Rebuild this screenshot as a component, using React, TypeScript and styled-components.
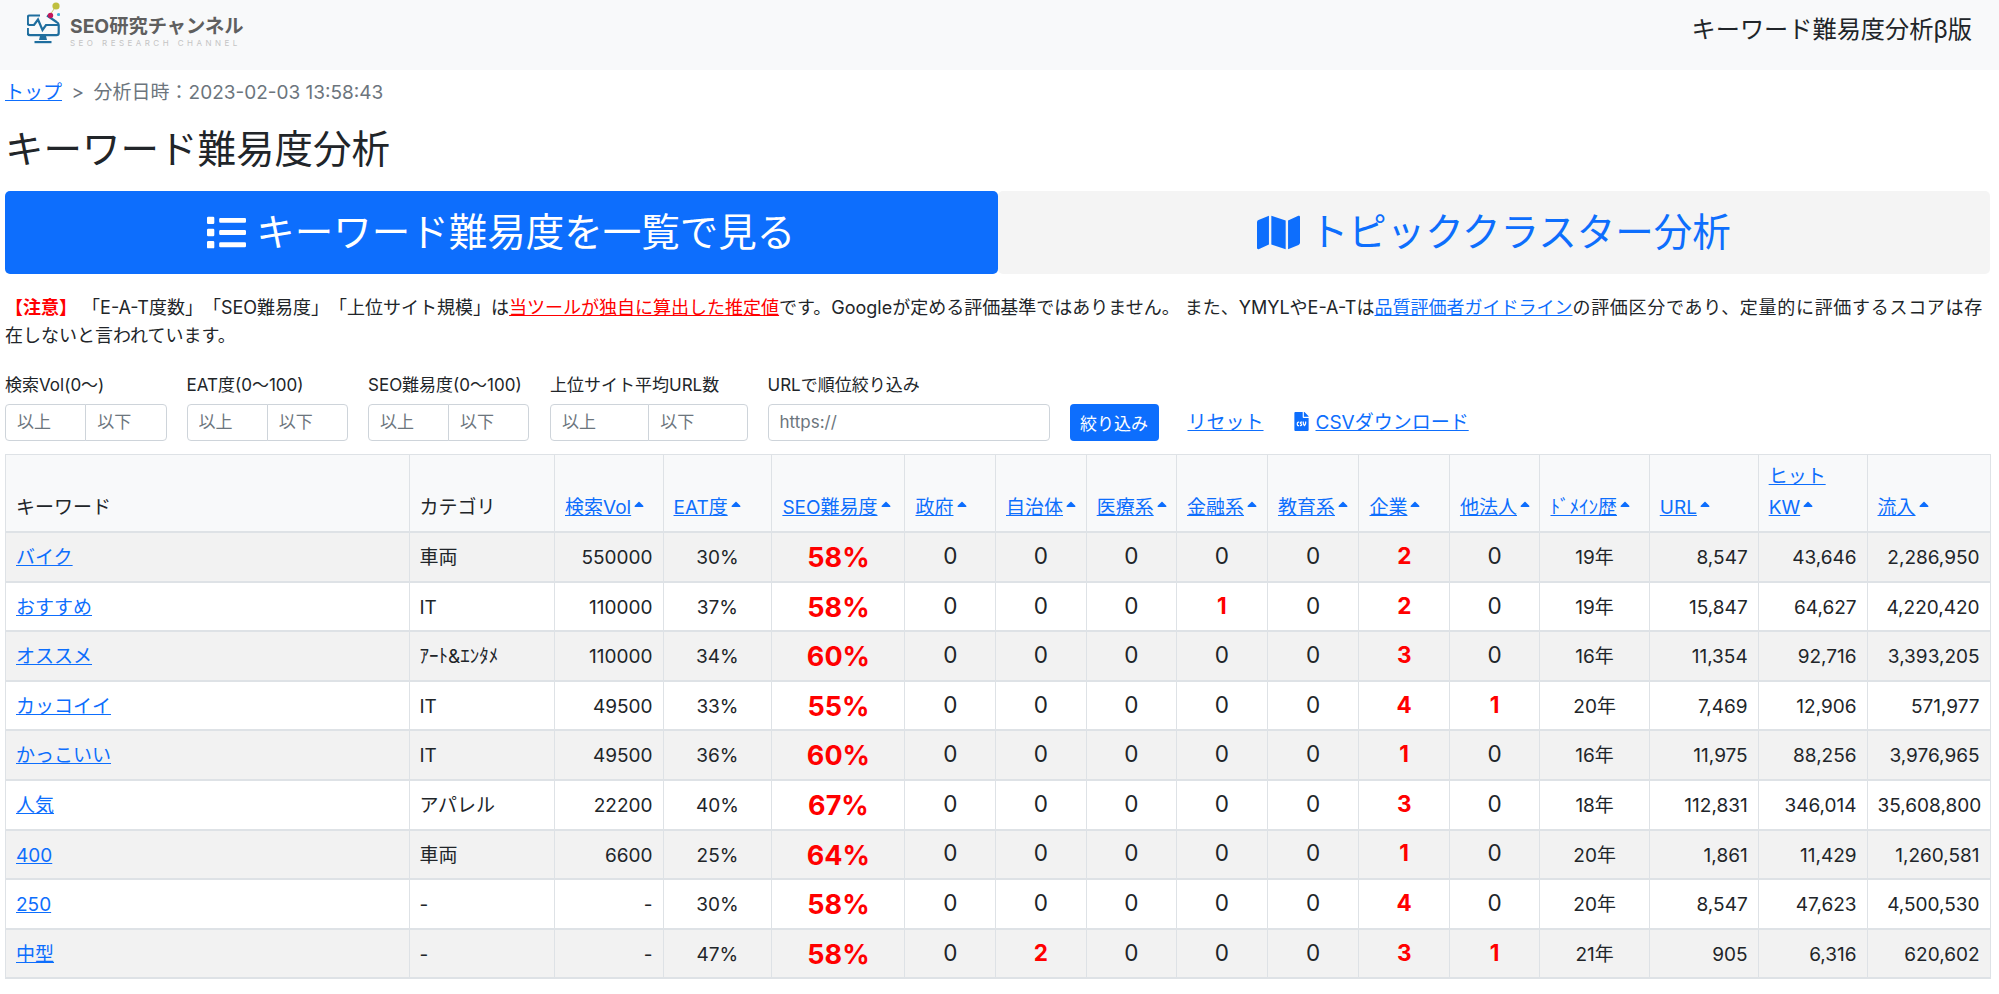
import React from 'react';
import styled, {createGlobalStyle} from 'styled-components';
import {FaFileCsv, FaList, FaMap, FaSortUp} from 'react-icons/fa';

const BLUE = '#0d6efd';
const RED = '#ff0000';

const GlobalStyle = createGlobalStyle`
  html, body {
    margin: 0;
    padding: 0;
    background: #FFFFFF;
    color: #212529;
    font-family: Inter, "Noto Sans CJK JP", sans-serif;
    font-size: 19px;
    line-height: 1.5;
    text-spacing-trim: space-all;
  }
  a {
    color: ${BLUE};
    text-decoration: underline;
  }
`;

const Navbar = styled.nav`
  height: 70px;
  background: #F8F9FA;
  display: flex;
  align-items: flex-start;
  justify-content: space-between;
  padding: 0 27px 0 27px;
`;

const Brand = styled.div`
  display: flex;
  align-items: flex-start;
  gap: 10px;
`;

const BrandIcon = styled.svg`
  width: 33px;
  height: 46px;
  flex: none;
`;

const BrandText = styled.div`
  margin-top: 13px;
  display: flex;
  flex-direction: column;
`;

const BrandName = styled.div`
  font-size: 19.3px;
  line-height: 26px;
  font-weight: 700;
  color: #5F5F5F;
  white-space: nowrap;
`;

const BrandSub = styled.div`
  font-size: 8px;
  line-height: 9px;
  color: #C4C4C4;
  letter-spacing: 3.45px;
  white-space: nowrap;
`;

const NavTitle = styled.div`
  margin-top: 12px;
  font-size: 24.2px;
  line-height: 36px;
  color: #212529;
`;

const Main = styled.main`
  padding: 0 9px 0 5px;
`;

const Breadcrumb = styled.div`
  margin-top: 8px;
  font-size: 19px;
  line-height: 30px;
  color: #6C757D;
  display: flex;
  gap: 9.5px;
`;

const PageTitle = styled.h2`
  margin: 18px 0 0 0;
  font-size: 38.5px;
  line-height: 46px;
  font-weight: 400;
`;

const Tabs = styled.div`
  margin-top: 19px;
  display: flex;
  height: 83px;
`;

const Tab = styled.a<{$active?: boolean}>`
  flex: 1;
  display: flex;
  align-items: center;
  justify-content: center;
  gap: 10px;
  font-size: 38.5px;
  text-decoration: none;
  border-radius: 5px;
  color: ${p => (p.$active ? '#FFFFFF' : BLUE)};
  background: ${p => (p.$active ? BLUE : '#F4F4F4')};
`;

const Notice = styled.p`
  margin: 20px 0 0 0;
  font-size: 18px;
  line-height: 28px;
`;

const NoticeTag = styled.b`
  color: ${RED};
`;

const NoticeRed = styled.a`
  color: ${RED};
`;

const NoticeTail = styled.span`
  letter-spacing: 0.7px;
`;

const Filters = styled.form`
  margin-top: 23.5px;
  display: flex;
  align-items: flex-end;
`;

const Field = styled.div<{$width: number; $gap: number}>`
  width: ${p => p.$width}px;
  margin-right: ${p => p.$gap}px;
  flex: none;
`;

const FieldLabel = styled.div`
  font-size: 17px;
  line-height: 22px;
  margin-bottom: 8px;
  white-space: nowrap;
`;

const InputGroup = styled.div`
  display: flex;
`;

const Input = styled.input`
  flex: 1;
  min-width: 0;
  width: 100%;
  height: 37px;
  box-sizing: border-box;
  padding: 0 11px;
  font-family: inherit;
  font-size: 17px;
  background: #FFFFFF;
  border: 1px solid #CED4DA;
  border-radius: 4px;
  &::placeholder {
    color: #6C757D;
    opacity: 1;
  }
  & + & {
    margin-left: -1px;
    border-top-left-radius: 0;
    border-bottom-left-radius: 0;
  }
  &:has(+ input) {
    border-top-right-radius: 0;
    border-bottom-right-radius: 0;
  }
`;

const SubmitButton = styled.button`
  width: 89px;
  height: 37px;
  flex: none;
  margin-right: 29px;
  padding: 0;
  border: none;
  border-radius: 4px;
  background: ${BLUE};
  color: #FFFFFF;
  font-family: inherit;
  font-size: 17px;
`;

const FilterLink = styled.a`
  font-size: 19px;
  line-height: 37px;
  margin-right: 28px;
  white-space: nowrap;
  svg {
    vertical-align: -2px;
    margin-right: 5px;
  }
`;

const Table = styled.table`
  margin-top: 13px;
  width: 100%;
  table-layout: fixed;
  border-collapse: collapse;
  font-size: 19px;
`;

const Col = styled.col<{$width: number}>`
  width: ${p => p.$width}px;
`;

const Th = styled.th`
  height: 78px;
  box-sizing: border-box;
  padding: 0 10px 8px;
  background: #F8F9FA;
  border: 1px solid #DEE2E6;
  border-bottom-width: 2px;
  vertical-align: bottom;
  text-align: left;
  font-weight: 400;
  line-height: 31px;
  white-space: pre;
  svg {
    vertical-align: -2px;
  }
`;

const Tr = styled.tr`
  &:nth-child(odd) td {
    background: #F2F2F2;
  }
`;

const Td = styled.td<{$align?: string}>`
  height: 49.6px;
  box-sizing: border-box;
  padding: 3px 10px 0;
  border: 1px solid #DEE2E6;
  border-bottom-width: 2px;
  text-align: ${p => p.$align || 'left'};
  vertical-align: middle;
  white-space: nowrap;
`;

const Level = styled.span`
  font-size: 27px;
  font-weight: 700;
  color: ${RED};
`;

const Count = styled.span<{$hit: boolean}>`
  position: relative;
  top: -2.5px;
  font-size: 22.5px;
  font-weight: ${p => (p.$hit ? 700 : 400)};
  color: ${p => (p.$hit ? RED : '#212529')};
`;

const COL_WIDTHS = [403.5, 145.5, 108.5, 108.9, 133.1, 90.5, 90.7, 90.3, 91, 91.5, 90.5, 90.5, 109.3, 108.9, 108.9, 123];

const SORT_HEADERS = ['検索Vol', 'EAT度', 'SEO難易度', '政府', '自治体', '医療系', '金融系', '教育系', '企業', '他法人', 'ﾄﾞﾒｲﾝ歴', 'URL', 'ヒット\nKW', '流入'];

const FILTERS = [
  {label: '検索Vol(0〜)', width: 161.5, gap: 20},
  {label: 'EAT度(0〜100)', width: 161.5, gap: 20},
  {label: 'SEO難易度(0〜100)', width: 161, gap: 21},
  {label: '上位サイト平均URL数', width: 197.5, gap: 20}
];

interface RowData {
  keyword: string;
  category: string;
  volume: string;
  eat: string;
  level: string;
  counts: number[];
  years: string;
  urls: string;
  hits: string;
  traffic: string;
}

const ROWS: RowData[] = [
  {keyword: 'バイク', category: '車両', volume: '550000', eat: '30%', level: '58%', counts: [0, 0, 0, 0, 0, 2, 0], years: '19年', urls: '8,547', hits: '43,646', traffic: '2,286,950'},
  {keyword: 'おすすめ', category: 'IT', volume: '110000', eat: '37%', level: '58%', counts: [0, 0, 0, 1, 0, 2, 0], years: '19年', urls: '15,847', hits: '64,627', traffic: '4,220,420'},
  {keyword: 'オススメ', category: 'ｱｰﾄ&ｴﾝﾀﾒ', volume: '110000', eat: '34%', level: '60%', counts: [0, 0, 0, 0, 0, 3, 0], years: '16年', urls: '11,354', hits: '92,716', traffic: '3,393,205'},
  {keyword: 'カッコイイ', category: 'IT', volume: '49500', eat: '33%', level: '55%', counts: [0, 0, 0, 0, 0, 4, 1], years: '20年', urls: '7,469', hits: '12,906', traffic: '571,977'},
  {keyword: 'かっこいい', category: 'IT', volume: '49500', eat: '36%', level: '60%', counts: [0, 0, 0, 0, 0, 1, 0], years: '16年', urls: '11,975', hits: '88,256', traffic: '3,976,965'},
  {keyword: '人気', category: 'アパレル', volume: '22200', eat: '40%', level: '67%', counts: [0, 0, 0, 0, 0, 3, 0], years: '18年', urls: '112,831', hits: '346,014', traffic: '35,608,800'},
  {keyword: '400', category: '車両', volume: '6600', eat: '25%', level: '64%', counts: [0, 0, 0, 0, 0, 1, 0], years: '20年', urls: '1,861', hits: '11,429', traffic: '1,260,581'},
  {keyword: '250', category: '-', volume: '-', eat: '30%', level: '58%', counts: [0, 0, 0, 0, 0, 4, 0], years: '20年', urls: '8,547', hits: '47,623', traffic: '4,500,530'},
  {keyword: '中型', category: '-', volume: '-', eat: '47%', level: '58%', counts: [0, 2, 0, 0, 0, 3, 1], years: '21年', urls: '905', hits: '6,316', traffic: '620,602'}
];

const LogoIcon = () => (
  <BrandIcon viewBox="0 0 33 46">
    <path d="M13 15.5H2.5Q0.8 15.5 0.8 17.5V23Q0.8 25 2.5 25H7L11 19.5L15.5 30L19 25H31.5" fill="none" stroke="#1F6E9E" strokeWidth="2.2" />
    <path d="M0.8 28V33Q0.8 35.2 3 35.2H29.5Q31.7 35.2 31.7 33V25Q31.7 23 29.5 22L20 15.5" fill="none" stroke="#1F6E9E" strokeWidth="2.2" />
    <path d="M13 36H19L20 40H12Z" fill="#1F6E9E" />
    <rect x="7.5" y="41" width="17" height="2.2" fill="#1F6E9E" />
    <path d="M23 15L29 6" stroke="#C9C86B" strokeWidth="1" />
    <circle cx="29" cy="6" r="3.6" fill="#BFBF3E" />
    <circle cx="23.5" cy="15.5" r="2.7" fill="#C2185B" />
    <circle cx="31.5" cy="14.5" r="1.6" fill="#3FB4DC" />
  </BrandIcon>
);

const App = () => {
  return (
    <>
      <GlobalStyle />
      <Navbar>
        <Brand>
          <LogoIcon />
          <BrandText>
            <BrandName>SEO研究チャンネル</BrandName>
            <BrandSub>SEO RESEARCH CHANNEL</BrandSub>
          </BrandText>
        </Brand>
        <NavTitle>キーワード難易度分析β版</NavTitle>
      </Navbar>
      <Main>
        <Breadcrumb>
          <a href="#top">トップ</a>
          <span>&gt;</span>
          <span>分析日時：2023-02-03 13:58:43</span>
        </Breadcrumb>
        <PageTitle>キーワード難易度分析</PageTitle>
        <Tabs>
          <Tab $active href="#list"><FaList size={39} />キーワード難易度を一覧で見る</Tab>
          <Tab href="#cluster"><FaMap size={43} />トピッククラスター分析</Tab>
        </Tabs>
        <Notice>
          <NoticeTag>【注意】</NoticeTag> 「E-A-T度数」「SEO難易度」「上位サイト規模」は<NoticeRed href="#note">当ツールが独自に算出した推定値</NoticeRed>です。Googleが定める評価基準ではありません。 また、YMYLやE-A-Tは<a href="#guide">品質評価者ガイドライン</a><NoticeTail>の評価区分であり、定量的に評価するスコアは存</NoticeTail><br />在しないと言われています。
        </Notice>
        <Filters>
          {FILTERS.map(filter => (
            <Field key={filter.label} $width={filter.width} $gap={filter.gap}>
              <FieldLabel>{filter.label}</FieldLabel>
              <InputGroup>
                <Input placeholder="以上" />
                <Input placeholder="以下" />
              </InputGroup>
            </Field>
          ))}
          <Field $width={282} $gap={20}>
            <FieldLabel>URLで順位絞り込み</FieldLabel>
            <InputGroup>
              <Input placeholder="https://" />
            </InputGroup>
          </Field>
          <SubmitButton type="button">絞り込み</SubmitButton>
          <FilterLink href="#reset">リセット</FilterLink>
          <FilterLink href="#csv"><FaFileCsv size={19} />CSVダウンロード</FilterLink>
        </Filters>
        <Table>
          <colgroup>
            {COL_WIDTHS.map((width, i) => <Col key={i} $width={width} />)}
          </colgroup>
          <thead>
            <tr>
              <Th>キーワード</Th>
              <Th>カテゴリ</Th>
              {SORT_HEADERS.map(title => (
                <Th key={title}>
                  <a href="#sort">{title}</a>
                  <FaSortUp size={16} color={BLUE} />
                </Th>
              ))}
            </tr>
          </thead>
          <tbody>
            {ROWS.map(row => (
              <Tr key={row.keyword}>
                <Td><a href="#keyword">{row.keyword}</a></Td>
                <Td>{row.category}</Td>
                <Td $align="right">{row.volume}</Td>
                <Td $align="center">{row.eat}</Td>
                <Td $align="center"><Level>{row.level}</Level></Td>
                {row.counts.map((count, i) => (
                  <Td key={i} $align="center"><Count $hit={count > 0}>{count}</Count></Td>
                ))}
                <Td $align="center">{row.years}</Td>
                <Td $align="right">{row.urls}</Td>
                <Td $align="right">{row.hits}</Td>
                <Td $align="right">{row.traffic}</Td>
              </Tr>
            ))}
          </tbody>
        </Table>
      </Main>
    </>
  );
};

export default App;
